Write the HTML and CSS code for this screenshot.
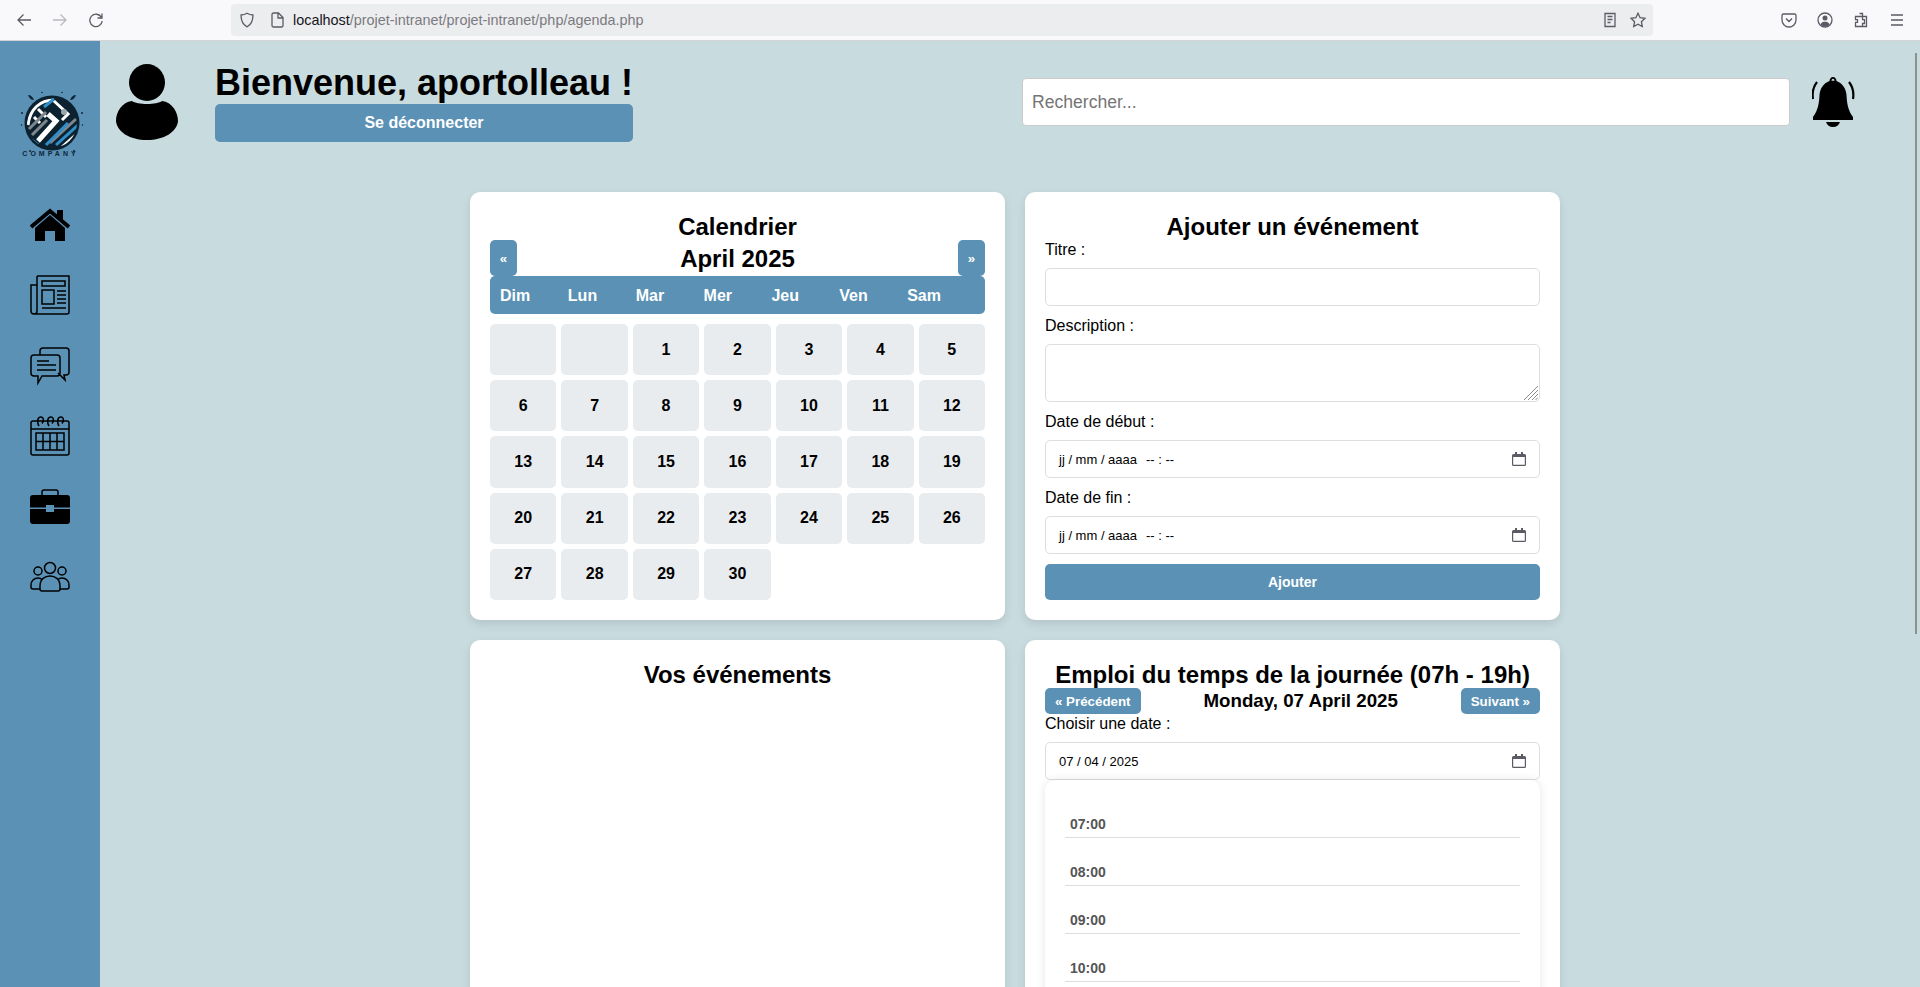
FILE: index.html
```html
<!DOCTYPE html>
<html lang="fr">
<head>
  <meta charset="utf-8">
  <title>Agenda</title>
  <link rel="stylesheet" href="styles.css">
</head>
<body>
  <!-- browser toolbar -->
  <div class="toolbar">
    <div class="nav-btns">
      <svg class="tb-icon" viewBox="0 0 16 16"><path d="M15 8H2M7.5 2.5L2 8l5.5 5.5"/></svg>
      <svg class="tb-icon dim" viewBox="0 0 16 16"><path d="M1 8h13M8.500 2.500L14 8l-5.500 5.500"/></svg>
      <svg class="tb-icon" viewBox="0 0 16 16"><path d="M13.500 5.500A6.200 6.200 0 1 0 14.200 9M14 1.500v4.500H9.500"/></svg>
    </div>
    <div class="urlbar">
      <svg class="tb-icon shield" viewBox="0 0 16 16"><path d="M8 1.200c2 1.200 4 1.700 6 1.800 0 5.500-1.500 9.500-6 11.800C3.500 12.500 2 8.500 2 3c2-.1 4-.6 6-1.800z"/></svg>
      <svg class="tb-icon page" viewBox="0 0 16 16"><path d="M3 2.500A1.500 1.500 0 0 1 4.500 1h5L14 5.500v8a1.500 1.500 0 0 1-1.500 1.500h-8A1.500 1.500 0 0 1 3 13.500zM9 1v5h5"/></svg>
      <span class="url"><b>localhost</b>/projet-intranet/projet-intranet/php/agenda.php</span>
      <svg class="tb-icon reader" viewBox="0 0 16 16"><path d="M3 1.500h10v13H3zM5.500 4.500h5M5.500 7.500h5M5.500 10.500h3"/></svg>
      <svg class="tb-icon star" viewBox="0 0 16 16"><path d="M8 1.200l2.100 4.500 4.900.6-3.600 3.400.9 4.900L8 12.200l-4.300 2.400.9-4.900L1 6.300l4.900-.6z"/></svg>
    </div>
    <div class="tools">
      <svg class="tb-icon" viewBox="0 0 16 16"><path d="M2.500 2h11A1.500 1.500 0 0 1 15 3.500V8A7 7 0 0 1 1 8V3.500A1.500 1.500 0 0 1 2.500 2zM5 6.500L8 9.500l3-3"/></svg>
      <svg class="tb-icon" viewBox="0 0 16 16"><circle cx="8" cy="8" r="7"/><circle class="solid" cx="8" cy="6" r="2.500"/><path class="solid" d="M3.500 12.500C4.500 10 6 9.800 8 9.800s3.500.2 4.500 2.700C11.500 14 9.500 14.500 8 14.500s-3.500-.5-4.500-2z"/></svg>
      <svg class="tb-icon" viewBox="0 0 16 16"><path d="M6.500 1.500h3v3h4v10h-4v-3h2V7.700h-2v-3.200H2.500v3.200h2v2.600h-2v4.200h7"/></svg>
      <svg class="tb-icon" viewBox="0 0 16 16"><path d="M2 3h12M2 8h12M2 13h12"/></svg>
    </div>
  </div>

  <div class="layout">
    <aside class="sidebar">
      <div class="logo">
        <svg class="logo-mark" viewBox="0 0 64 64">
          <defs><clipPath id="logo-clip"><circle cx="32" cy="32" r="25"/></clipPath></defs>
          <path class="logo-leaf" d="M8 4c3 0 5 2 6 5-3 0-5-2-6-5zM56 4c-3 0-5 2-6 5 3 0 5-2 6-5z"/>
          <g class="logo-dots">
            <circle cx="2" cy="22" r="1"/><circle cx="62" cy="22" r="1"/>
            <circle cx="1.500" cy="34" r=".8"/><circle cx="62.500" cy="34" r=".8"/>
            <circle cx="10" cy="60" r="1"/><circle cx="54" cy="60" r="1"/>
            <circle cx="22" cy="1.500" r=".8"/><circle cx="42" cy="1.500" r=".8"/>
          </g>
          <circle cx="32" cy="32" r="27.500" fill="#0d2230"/>
          <g clip-path="url(#logo-clip)" fill="none" stroke-width="3">
            <path d="M8 34C10 18 20 9 34 9" stroke="#fff"/>
            <path d="M18 18l8 8M14 26l6 6" stroke="#fff"/>
            <path d="M24 16l10-8" stroke="#2f8fca"/>
            <path d="M34 10l14 13-6 6" stroke="#fff"/>
            <circle cx="44" cy="21" r="3" fill="#9aa7ad" stroke="none"/>
            <path d="M18 50l18-20-8-7" stroke="#fff" stroke-width="5"/>
            <path d="M9 38l17-17M12 44l15-15" stroke="#7f878c"/>
            <path d="M30 52l26-24" stroke="#7f878c"/>
            <path d="M36 54l22-20" stroke="#2f8fca"/>
            <path d="M26 54l22-22" stroke="#2f8fca"/>
            <path d="M42 56l18-16" stroke="#fff"/>
            <path d="M8 46l10 8" stroke="#2f8fca"/>
          </g>
        </svg>
        <span class="logo-name">COMPANY</span>
      </div>
      <nav class="side-nav">
        <a class="side-link"><svg viewBox="0 0 40 40"><path class="fill" d="M5 23L20 10l15 13v13H25V26H15v10H5zM27 5h6v12l-6-5z"/><path class="line thick" d="M1 22L20 6l19 16"/></svg></a>
        <a class="side-link"><svg viewBox="0 0 40 40"><path class="line" d="M7 1h32v36a2 2 0 0 1-2 2H4M7 1v35a3 3 0 0 1-3 3 3 3 0 0 1-3-3V10h6M12 6h23v5H12zM12 15h12v14H12zM27 16h9M27 20h9M27 24h9M27 28h9M12 33h24"/></svg></a>
        <a class="side-link"><svg viewBox="0 0 40 40"><path class="line" d="M10 9V5a3 3 0 0 1 3-3h23a3 3 0 0 1 3 3v21a3 3 0 0 1-3 3h-2v0l1 5-7-7M4 9h23a3 3 0 0 1 3 3v15a3 3 0 0 1-3 3H12l-4 7v-7H4a3 3 0 0 1-3-3V12a3 3 0 0 1 3-3zM7 15h12M7 19h19M7 24h19"/></svg></a>
        <a class="side-link"><svg viewBox="0 0 40 40"><path class="line" d="M3 5h34a2 2 0 0 1 2 2v30a2 2 0 0 1-2 2H3a2 2 0 0 1-2-2V7a2 2 0 0 1 2-2zM1 13h38M6 17h28v17H6zM13 17v17M20 17v17M27 17v17M6 25.500h28M9 10c-2-3-2-8.500 1.500-9s3.500 4 1.500 6.500M19 10c-2-3-2-8.500 1.500-9s3.500 4 1.500 6.500M29 10c-2-3-2-8.500 1.500-9s3.500 4 1.500 6.500"/></svg></a>
        <a class="side-link"><svg viewBox="0 0 40 40"><path class="line" d="M12 8V5a2 2 0 0 1 2-2h12a2 2 0 0 1 2 2v3"/><path class="fill" d="M3 8h34a3 3 0 0 1 3 3v9.500H24V18h-8v2.500H0V11a3 3 0 0 1 3-3zM0 22h16v3h8v-3h16v12a3 3 0 0 1-3 3H3a3 3 0 0 1-3-3z"/></svg></a>
        <a class="side-link"><svg viewBox="0 0 40 40"><circle class="line" cx="20" cy="11" r="5.500"/><circle class="line" cx="8" cy="14" r="4"/><circle class="line" cx="32" cy="14" r="4"/><path class="line" d="M10 32a2 2 0 0 0 2 2h16a2 2 0 0 0 2-2v-3c0-7-5-10-10-10s-10 3-10 10zM10 32H3a2 2 0 0 1-2-2v-2c0-4 3-7 7-7 2 0 3 .500 4 1.500M30 32h7a2 2 0 0 0 2-2v-2c0-4-3-7-7-7-2 0-3 .500-4 1.500"/></svg></a>
      </nav>
    </aside>

    <main class="content">
      <header class="topbar">
        <svg class="avatar" viewBox="0 0 62 76"><ellipse cx="31" cy="18.500" rx="18" ry="18.500"/><path d="M16 37c5 4 25 4 30 0 10 1 16 11 16 20-1 11-14 19-31 19S1 68 0 57c0-9 6-19 16-20z"/></svg>
        <div class="user-box">
          <h1>Bienvenue, aportolleau !</h1>
          <button class="btn logout">Se déconnecter</button>
        </div>
        <input class="search" type="text" placeholder="Rechercher...">
        <svg class="bell" viewBox="0 0 44 50"><path fill-rule="evenodd" d="M21 0c-2 0-3.500 2-3.500 4C12 6 8 11 7.500 18 7 27 6 33 1 40v3h40v-3c-5-7-6-13-6.500-22C34 11 30 6 24.500 4c0-2-1.500-4-3.500-4zM21 1.800c-1 0-1.500 1-1.500 2h3c0-1-.5-2-1.500-2zM14 45h14c-1 3-3.500 5-7 5s-6-2-7-5z"/><path class="bell-arc" d="M5 5C1 10 0 16 1 22M37 5c4 5 5 11 4 17"/></svg>
      </header>

      <div class="cards">
        <section class="card">
          <h2>Calendrier</h2>
          <div class="month-nav">
            <button class="btn small">«</button>
            <h2>April 2025</h2>
            <button class="btn small">»</button>
          </div>
          <div class="week-head">
            <span>Dim</span><span>Lun</span><span>Mar</span><span>Mer</span><span>Jeu</span><span>Ven</span><span>Sam</span>
          </div>
          <div class="days">
            <div class="day"></div><div class="day"></div><div class="day">1</div><div class="day">2</div><div class="day">3</div><div class="day">4</div><div class="day">5</div>
            <div class="day">6</div><div class="day">7</div><div class="day">8</div><div class="day">9</div><div class="day">10</div><div class="day">11</div><div class="day">12</div>
            <div class="day">13</div><div class="day">14</div><div class="day">15</div><div class="day">16</div><div class="day">17</div><div class="day">18</div><div class="day">19</div>
            <div class="day">20</div><div class="day">21</div><div class="day">22</div><div class="day">23</div><div class="day">24</div><div class="day">25</div><div class="day">26</div>
            <div class="day">27</div><div class="day">28</div><div class="day">29</div><div class="day">30</div>
          </div>
        </section>

        <section class="card">
          <h2>Ajouter un événement</h2>
          <form class="event-form">
            <label>Titre :</label>
            <input class="field" type="text">
            <label>Description :</label>
            <div class="area-wrap">
              <textarea class="field area"></textarea>
              <svg class="grip" viewBox="0 0 14 14"><path d="M14 0L0 14M14 4L4 14M14 8L8 14M14 11.500L11.500 14"/></svg>
            </div>
            <label>Date de début :</label>
            <div class="field date"><span>jj / mm / aaaa</span><span class="time">-- : --</span><svg class="cal-icon" viewBox="0 0 14 14"><path d="M3 0h2v2H9V0h2v2h1.500A1.500 1.500 0 0 1 14 3.500v9a1.500 1.500 0 0 1-1.500 1.500h-11A1.500 1.500 0 0 1 0 12.500v-9A1.500 1.500 0 0 1 1.500 2H3zM1.200 5v7.500a.3.3 0 0 0 .3.3h11a.3.3 0 0 0 .3-.3V5z"/></svg></div>
            <label>Date de fin :</label>
            <div class="field date"><span>jj / mm / aaaa</span><span class="time">-- : --</span><svg class="cal-icon" viewBox="0 0 14 14"><path d="M3 0h2v2H9V0h2v2h1.500A1.500 1.500 0 0 1 14 3.500v9a1.500 1.500 0 0 1-1.500 1.500h-11A1.500 1.500 0 0 1 0 12.500v-9A1.500 1.500 0 0 1 1.500 2H3zM1.200 5v7.500a.3.3 0 0 0 .3.3h11a.3.3 0 0 0 .3-.3V5z"/></svg></div>
            <button class="btn submit" type="button">Ajouter</button>
          </form>
        </section>

        <section class="card">
          <h2>Vos événements</h2>
        </section>

        <section class="card">
          <h2>Emploi du temps de la journée (07h - 19h)</h2>
          <div class="day-nav">
            <button class="btn tiny">« Précédent</button>
            <h3>Monday, 07 April 2025</h3>
            <button class="btn tiny">Suivant »</button>
          </div>
          <label>Choisir une date :</label>
          <div class="field date"><span>07 / 04 / 2025</span><svg class="cal-icon" viewBox="0 0 14 14"><path d="M3 0h2v2H9V0h2v2h1.500A1.500 1.500 0 0 1 14 3.500v9a1.500 1.500 0 0 1-1.500 1.500h-11A1.500 1.500 0 0 1 0 12.500v-9A1.500 1.500 0 0 1 1.500 2H3zM1.200 5v7.500a.3.3 0 0 0 .3.3h11a.3.3 0 0 0 .3-.3V5z"/></svg></div>
          <div class="schedule">
            <div class="slot">07:00</div>
            <div class="slot">08:00</div>
            <div class="slot">09:00</div>
            <div class="slot">10:00</div>
          </div>
        </section>
      </div>
    </main>
  </div>
  <div class="scroll-thumb"></div>
</body>
</html>
```
FILE: styles.css
```css
* {
  box-sizing: border-box;
}

html,
body {
  margin: 0;
  height: 987px;
  overflow: hidden;
}

body {
  font-family: "Liberation Sans", Arial, sans-serif;
  font-size: 16px;
  color: #000;
  background: #c8dbdf;
}

/* browser toolbar */
.toolbar {
  height: 41px;
  display: flex;
  align-items: center;
  background: #f9f9fb;
  box-shadow: inset 0 -1px 0 #d4d4d8;
  padding: 0 0 1px 16px;
}

.tb-icon {
  width: 16px;
  height: 16px;
  fill: none;
  stroke: #5b5b66;
  stroke-width: 1.3;
  flex: none;
}

.tb-icon.dim {
  stroke: #b9b9bf;
}

.tb-icon .solid {
  fill: #5b5b66;
  stroke: none;
}

.nav-btns {
  display: flex;
  gap: 20px;
  width: 215px;
}

.urlbar {
  width: 1422px;
  height: 32px;
  background: #ecedef;
  border-radius: 4px;
  display: flex;
  align-items: center;
  padding: 0 7px 0 8px;
}

.page {
  margin-left: 14px;
}

.url {
  margin-left: 8px;
  font-size: 14.400px;
  color: #7a7a80;
  flex: 1;
}

.url b {
  font-weight: normal;
  color: #15141a;
}

.reader {
  margin-right: 12px;
}

.tools {
  display: flex;
  gap: 20px;
  margin-left: 128px;
}

.scroll-thumb {
  position: absolute;
  left: 1915px;
  top: 53px;
  width: 2px;
  height: 581px;
  background: #8b9091;
}

/* sidebar */
.layout {
  display: flex;
  height: 946px;
}

.sidebar {
  width: 100px;
  flex: none;
  background: #5a91b5;
  padding-top: 50px;
}

.logo {
  display: flex;
  flex-direction: column;
  align-items: center;
  padding-left: 4px;
}

.logo-mark {
  width: 64px;
  height: 64px;
}

.logo-leaf {
  fill: #10263a;
}

.logo-dots {
  fill: #10263a;
}

.logo-name {
  font-weight: bold;
  font-size: 7px;
  line-height: 8px;
  letter-spacing: 3px;
  margin: -5px 0 0 -3px;
  color: #10263a;
}

.side-nav {
  display: flex;
  flex-direction: column;
  align-items: center;
  gap: 30.400px;
  margin-top: 47px;
}

.side-link {
  display: block;
  width: 40px;
  height: 40px;
}

.side-link svg {
  display: block;
  width: 40px;
  height: 40px;
}

.line {
  fill: none;
  stroke: #000;
  stroke-width: 1.500;
}

.line.thick {
  stroke-width: 4;
}

.fill {
  fill: #000;
}

/* header */
.content {
  flex: 1;
  min-width: 0;
}

.topbar {
  display: flex;
  align-items: center;
  height: 80px;
  margin: 21px 64px 50px 16px;
}

.avatar {
  width: 62px;
  height: 76px;
  flex: none;
  margin-right: 37px;
}

.user-box {
  width: 418px;
  flex: none;
}

h1 {
  margin: 0;
  font-size: 36px;
  line-height: 42px;
  font-weight: bold;
  white-space: nowrap;
}

.btn {
  border: none;
  border-radius: 5px;
  background: #5a91b5;
  color: #fff;
  font-family: inherit;
  font-weight: bold;
  padding: 0;
}

.logout {
  display: block;
  width: 100%;
  height: 38px;
  font-size: 16px;
}

.search {
  width: 768px;
  height: 48px;
  margin-left: auto;
  padding: 0 9px;
  font-family: inherit;
  font-size: 17.600px;
  background: #fff;
  border: 1px solid #ccc;
  border-radius: 4px;
}

.search::placeholder {
  color: #757575;
  opacity: 1;
}

.bell {
  width: 44px;
  height: 50px;
  flex: none;
  margin-left: 22px;
}

.bell-arc {
  fill: none;
  stroke: #000;
  stroke-width: 2.200;
}

/* cards */
.cards {
  display: grid;
  grid-template-columns: 535px 535px;
  gap: 20px;
  justify-content: center;
  padding-left: 10px;
}

.card {
  background: #fff;
  border-radius: 10px;
  padding: 20px;
  box-shadow: 0 4px 10px rgba(0, 0, 0, 0.1);
}

h2 {
  margin: 0;
  height: 28px;
  font-size: 24px;
  line-height: 30px;
  font-weight: bold;
  text-align: center;
}

.month-nav {
  display: flex;
  justify-content: space-between;
  align-items: center;
  height: 36px;
}

.small {
  width: 27px;
  height: 36px;
  font-size: 13.330px;
}

.week-head {
  display: grid;
  grid-template-columns: repeat(7, 1fr);
  height: 38px;
  padding: 11px 10px 9px;
  line-height: 18px;
  font-weight: bold;
  color: #fff;
  background: #5a91b5;
  border-radius: 5px;
}

.days {
  display: grid;
  grid-template-columns: repeat(7, 1fr);
  grid-auto-rows: 51.200px;
  gap: 5px;
  margin-top: 10px;
}

.day {
  display: flex;
  align-items: center;
  justify-content: center;
  background: #e9ecef;
  border-radius: 5px;
  font-weight: bold;
}

/* form */
label {
  display: block;
  height: 18px;
  line-height: 20px;
}

.field {
  display: block;
  width: 100%;
  height: 38px;
  margin: 10px 0;
  padding: 0 8px;
  background: #fff;
  border: 1px solid #ddd;
  border-radius: 5px;
  font-family: inherit;
  font-size: 13px;
}

.area-wrap {
  position: relative;
  height: 78px;
  padding-top: 10px;
}

.area {
  height: 58px;
  margin: 0;
  resize: none;
}

.grip {
  position: absolute;
  right: 2px;
  bottom: 12px;
  width: 14px;
  height: 14px;
  fill: none;
  stroke: #8a8a8a;
  stroke-width: 1;
}

.date {
  display: flex;
  align-items: center;
  padding: 0 13px;
}

.time {
  margin-left: 9px;
}

.cal-icon {
  width: 14px;
  height: 14px;
  margin-left: auto;
  fill: #5b5b66;
}

.submit {
  display: block;
  width: 100%;
  height: 36px;
  font-size: 14px;
}

/* day schedule */
.day-nav {
  display: flex;
  justify-content: space-between;
  align-items: center;
  height: 26px;
}

.tiny {
  height: 26px;
  padding: 0 10px;
  font-size: 13.330px;
}

h3 {
  margin: 0;
  font-size: 18.720px;
  font-weight: bold;
}

.day-nav + label + .field {
  margin-bottom: 0;
}

.schedule {
  padding: 10px 20px 20px;
  border-radius: 10px;
  background: #fff;
  box-shadow: 0 0 10px rgba(0, 0, 0, 0.1);
}

.slot {
  height: 48px;
  display: flex;
  align-items: flex-end;
  padding: 0 0 5px 5px;
  border-bottom: 1px solid #ddd;
  font-size: 14px;
  line-height: 16px;
  font-weight: bold;
  color: #555;
}
```
